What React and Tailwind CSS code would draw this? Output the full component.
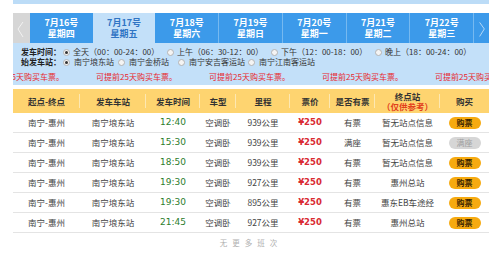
import React from 'react';

const DATES = [
  { d: '7月16号', w: '星期四' },
  { d: '7月17号', w: '星期五', active: true },
  { d: '7月18号', w: '星期六' },
  { d: '7月19号', w: '星期日' },
  { d: '7月20号', w: '星期一' },
  { d: '7月21号', w: '星期二' },
  { d: '7月22号', w: '星期三' },
];

const TIMES = [
  { label: '全天（00：00-24：00）', checked: true },
  { label: '上午（06：30-12：00）' },
  { label: '下午（12：00-18：00）' },
  { label: '晚上（18：00-24：00）' },
];

const STATIONS = [
  { label: '南宁埌东站', w: 'w-[55px]', checked: true },
  { label: '南宁金桥站', w: 'w-[60px]' },
  { label: '南宁安吉客运站', w: 'w-[70px]' },
  { label: '南宁江南客运站', w: 'w-[70px]' },
];

const ROWS = [
  { time: '12:40', km: '939公里', left: '有票', end: '暂无站点信息', full: false },
  { time: '15:30', km: '939公里', left: '满座', end: '暂无站点信息', full: true },
  { time: '18:50', km: '939公里', left: '有票', end: '暂无站点信息', full: false },
  { time: '19:30', km: '927公里', left: '有票', end: '惠州总站', full: false },
  { time: '19:30', km: '895公里', left: '有票', end: '惠东EB车途经', full: false },
  { time: '21:45', km: '927公里', left: '有票', end: '惠州总站', full: false },
];

// column widths, left to right
const COLS = ['w-[67px]', 'w-[66px]', 'w-[54px]', 'w-[36px]', 'w-[54px]', 'w-[40px]', 'w-[45px]', 'w-[65px]', 'w-[49px]'];

const sep = 'bg-[linear-gradient(#fde8b2,#fde8b2)] bg-no-repeat bg-[length:1px_14px] bg-[position:right_center]';

function Radio({ checked }) {
  return (
    <span className="w-[7px] h-[7px] rounded-full border border-[#b4b4b4] bg-[#f4f4f4] flex items-center justify-center shrink-0">
      {checked && <span className="w-[3px] h-[3px] rounded-full bg-[#333]" />}
    </span>
  );
}

export default function App() {
  const cjk = { fontFamily: '"Noto Sans CJK SC", "Liberation Sans", sans-serif' };

  return (
    <div className="w-[500px] h-[253px] bg-white overflow-hidden" style={cjk}>
      <div className="ml-[13px] w-[476px]">
        {/* top strip */}
        <div className="h-[4px] bg-[#bcdcf7]" />

        {/* date tabs */}
        <div className="mt-[9px] h-[30px] flex">
          <div className="w-[17px] h-full bg-[#d6d6d6] flex items-center">
            <svg width="17" height="30" viewBox="0 0 17 30">
              <polyline points="10,9 5,16 10,24" fill="none" stroke="#f2f2f2" strokeWidth="1" />
            </svg>
          </div>
          {DATES.map((t, i) => (
            <div
              key={t.d}
              className={
                'flex-1 h-full flex flex-col items-center justify-center font-bold text-[9px] leading-[11px] ' +
                (t.active
                  ? 'bg-[#c3e0f9] text-[#2f74c4]'
                  : 'bg-[#3c9aea] text-white ' + (i > 0 && !DATES[i - 1].active ? 'border-l border-[#76b9f0]' : ''))
              }
            >
              <span className="h-[11px]">{t.d}</span>
              <span className="h-[11px]">{t.w}</span>
            </div>
          ))}
          <div className="w-[16px] h-full bg-[#3c9aea] border-l border-[#76b9f0] flex items-center">
            <svg width="16" height="30" viewBox="0 0 16 30">
              <polyline points="6,9 11,16 6,24" fill="none" stroke="#b9dbf8" strokeWidth="1" />
            </svg>
          </div>
        </div>

        {/* filters */}
        <div className="h-[42px] bg-[#c3e0f9] pt-[4px] text-[8px] leading-[10px] text-[#333]">
          <div className="h-[10px] flex items-center whitespace-nowrap">
            <span className="w-[50px] pl-[8px] font-bold text-[#222] shrink-0">发车时间：</span>
            {TIMES.map((t) => (
              <div key={t.label} className="w-[104px] flex items-center gap-[3px] shrink-0">
                <Radio checked={t.checked} />
                <span>{t.label}</span>
              </div>
            ))}
          </div>
          <div className="h-[10px] flex items-center whitespace-nowrap">
            <span className="w-[50px] pl-[8px] font-bold text-[#222] shrink-0">始发车站：</span>
            {STATIONS.map((s) => (
              <div key={s.label} className={s.w + ' flex items-center gap-[4px] shrink-0'}>
                <Radio checked={s.checked} />
                <span>{s.label}</span>
              </div>
            ))}
          </div>
          <div className="mt-[4px] h-[11px] overflow-hidden">
            <div className="flex ml-[-30px] text-[8px] leading-[11px] text-[#e8262d]">
              {[0, 1, 2, 3, 4].map((k) => (
                <span key={k} className="w-[113px] shrink-0 whitespace-nowrap">可提前25天购买车票。</span>
              ))}
            </div>
          </div>
        </div>

        {/* table header */}
        <div className="mt-[4px] h-[24px] bg-[#fed470] flex items-center text-[8.5px] font-bold text-[#333] leading-[10px]">
          {['起点-终点', '发车车站', '发车时间', '车型', '里程', '票价', '是否有票'].map((h, i) => (
            <div key={h} className={COLS[i] + ' h-full flex items-center justify-center ' + sep}>{h}</div>
          ))}
          <div className={COLS[7] + ' h-full flex flex-col items-center justify-center ' + sep}>
            <span className="h-[10px]">终点站</span>
            <span className="h-[10px] text-[#e2401c]">（仅供参考）</span>
          </div>
          <div className={COLS[8] + ' h-full flex items-center justify-center'}>购买</div>
        </div>

        {/* rows */}
        {ROWS.map((r, idx) => (
          <div key={idx} className="h-[20px] flex items-center border-b border-[#e4e4e4] text-[8.5px] text-[#444]">
            <div className={COLS[0] + ' text-center'}>南宁-惠州</div>
            <div className={COLS[1] + ' text-center'}>南宁埌东站</div>
            <div className={COLS[2] + ' text-center text-[9px] text-[#2c7d2c]'} style={{ fontFamily: '"DejaVu Sans", sans-serif' }}>{r.time}</div>
            <div className={COLS[3] + ' text-center'}>空调卧</div>
            <div className={COLS[4] + ' text-center'}>{r.km}</div>
            <div className={COLS[5] + ' text-center text-[8.5px] font-bold text-[#d92b32]'} style={{ fontFamily: '"DejaVu Sans", sans-serif' }}>¥250</div>
            <div className={COLS[6] + ' text-center'}>{r.left}</div>
            <div className={COLS[7] + ' text-center whitespace-nowrap'}>{r.end}</div>
            <div className={COLS[8] + ' flex justify-center'}>
              {r.full ? (
                <span className="w-[32px] h-[12px] rounded-full bg-[#d6d6d6] text-[#a0a0a0] text-[8px] leading-[12px] text-center">满座</span>
              ) : (
                <span className="w-[32px] h-[12px] rounded-full bg-[#f6aa10] text-[#3a2400] font-bold text-[8px] leading-[12px] text-center">购票</span>
              )}
            </div>
          </div>
        ))}

        {/* footer */}
        <div className="mt-[4px] text-center text-[7.5px] text-[#b0b0b0] tracking-[5px]">无更多班次</div>
      </div>
    </div>
  );
}
